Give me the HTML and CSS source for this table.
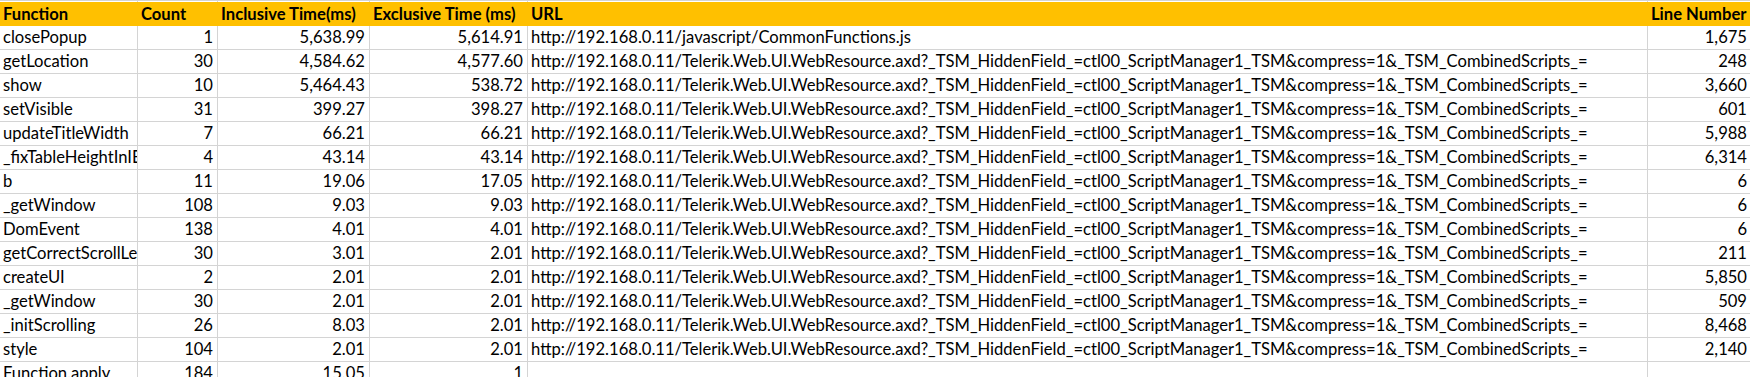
FILE: index.html
```html
<!DOCTYPE html>
<html>
<head>
  <title>Function Profile</title>
  <link rel="stylesheet" href="styles.css">
</head>

<body>
  <div class="sheet">
    <div class="row edge">
      <div class="cell"></div>
      <div class="cell"></div>
      <div class="cell"></div>
      <div class="cell"></div>
      <div class="cell"></div>
      <div class="cell"></div>
    </div>

    <div class="row head">
      <div class="cell">Function</div>
      <div class="cell">Count</div>
      <div class="cell">Inclusive Time(ms)</div>
      <div class="cell">Exclusive Time (ms)</div>
      <div class="cell">URL</div>
      <div class="cell">Line Number</div>
    </div>

    <div class="row">
      <div class="cell">closePopup</div>
      <div class="cell num">1</div>
      <div class="cell num">5,638.99</div>
      <div class="cell num">5,614.91</div>
      <div class="cell">http://192.168.0.11/javascript/CommonFunctions.js</div>
      <div class="cell num">1,675</div>
    </div>
    <div class="row">
      <div class="cell">getLocation</div>
      <div class="cell num">30</div>
      <div class="cell num">4,584.62</div>
      <div class="cell num">4,577.60</div>
      <div class="cell">http://192.168.0.11/Telerik.Web.UI.WebResource.axd?_TSM_HiddenField_=ctl00_ScriptManager1_TSM&amp;compress=1&amp;_TSM_CombinedScripts_=</div>
      <div class="cell num">248</div>
    </div>
    <div class="row">
      <div class="cell">show</div>
      <div class="cell num">10</div>
      <div class="cell num">5,464.43</div>
      <div class="cell num">538.72</div>
      <div class="cell">http://192.168.0.11/Telerik.Web.UI.WebResource.axd?_TSM_HiddenField_=ctl00_ScriptManager1_TSM&amp;compress=1&amp;_TSM_CombinedScripts_=</div>
      <div class="cell num">3,660</div>
    </div>
    <div class="row">
      <div class="cell">setVisible</div>
      <div class="cell num">31</div>
      <div class="cell num">399.27</div>
      <div class="cell num">398.27</div>
      <div class="cell">http://192.168.0.11/Telerik.Web.UI.WebResource.axd?_TSM_HiddenField_=ctl00_ScriptManager1_TSM&amp;compress=1&amp;_TSM_CombinedScripts_=</div>
      <div class="cell num">601</div>
    </div>
    <div class="row">
      <div class="cell">updateTitleWidth</div>
      <div class="cell num">7</div>
      <div class="cell num">66.21</div>
      <div class="cell num">66.21</div>
      <div class="cell">http://192.168.0.11/Telerik.Web.UI.WebResource.axd?_TSM_HiddenField_=ctl00_ScriptManager1_TSM&amp;compress=1&amp;_TSM_CombinedScripts_=</div>
      <div class="cell num">5,988</div>
    </div>
    <div class="row">
      <div class="cell">_fixTableHeightInIE</div>
      <div class="cell num">4</div>
      <div class="cell num">43.14</div>
      <div class="cell num">43.14</div>
      <div class="cell">http://192.168.0.11/Telerik.Web.UI.WebResource.axd?_TSM_HiddenField_=ctl00_ScriptManager1_TSM&amp;compress=1&amp;_TSM_CombinedScripts_=</div>
      <div class="cell num">6,314</div>
    </div>
    <div class="row">
      <div class="cell">b</div>
      <div class="cell num">11</div>
      <div class="cell num">19.06</div>
      <div class="cell num">17.05</div>
      <div class="cell">http://192.168.0.11/Telerik.Web.UI.WebResource.axd?_TSM_HiddenField_=ctl00_ScriptManager1_TSM&amp;compress=1&amp;_TSM_CombinedScripts_=</div>
      <div class="cell num">6</div>
    </div>
    <div class="row">
      <div class="cell">_getWindow</div>
      <div class="cell num">108</div>
      <div class="cell num">9.03</div>
      <div class="cell num">9.03</div>
      <div class="cell">http://192.168.0.11/Telerik.Web.UI.WebResource.axd?_TSM_HiddenField_=ctl00_ScriptManager1_TSM&amp;compress=1&amp;_TSM_CombinedScripts_=</div>
      <div class="cell num">6</div>
    </div>
    <div class="row">
      <div class="cell">DomEvent</div>
      <div class="cell num">138</div>
      <div class="cell num">4.01</div>
      <div class="cell num">4.01</div>
      <div class="cell">http://192.168.0.11/Telerik.Web.UI.WebResource.axd?_TSM_HiddenField_=ctl00_ScriptManager1_TSM&amp;compress=1&amp;_TSM_CombinedScripts_=</div>
      <div class="cell num">6</div>
    </div>
    <div class="row">
      <div class="cell">getCorrectScrollLeft</div>
      <div class="cell num">30</div>
      <div class="cell num">3.01</div>
      <div class="cell num">2.01</div>
      <div class="cell">http://192.168.0.11/Telerik.Web.UI.WebResource.axd?_TSM_HiddenField_=ctl00_ScriptManager1_TSM&amp;compress=1&amp;_TSM_CombinedScripts_=</div>
      <div class="cell num">211</div>
    </div>
    <div class="row">
      <div class="cell">createUI</div>
      <div class="cell num">2</div>
      <div class="cell num">2.01</div>
      <div class="cell num">2.01</div>
      <div class="cell">http://192.168.0.11/Telerik.Web.UI.WebResource.axd?_TSM_HiddenField_=ctl00_ScriptManager1_TSM&amp;compress=1&amp;_TSM_CombinedScripts_=</div>
      <div class="cell num">5,850</div>
    </div>
    <div class="row">
      <div class="cell">_getWindow</div>
      <div class="cell num">30</div>
      <div class="cell num">2.01</div>
      <div class="cell num">2.01</div>
      <div class="cell">http://192.168.0.11/Telerik.Web.UI.WebResource.axd?_TSM_HiddenField_=ctl00_ScriptManager1_TSM&amp;compress=1&amp;_TSM_CombinedScripts_=</div>
      <div class="cell num">509</div>
    </div>
    <div class="row">
      <div class="cell">_initScrolling</div>
      <div class="cell num">26</div>
      <div class="cell num">8.03</div>
      <div class="cell num">2.01</div>
      <div class="cell">http://192.168.0.11/Telerik.Web.UI.WebResource.axd?_TSM_HiddenField_=ctl00_ScriptManager1_TSM&amp;compress=1&amp;_TSM_CombinedScripts_=</div>
      <div class="cell num">8,468</div>
    </div>
    <div class="row">
      <div class="cell">style</div>
      <div class="cell num">104</div>
      <div class="cell num">2.01</div>
      <div class="cell num">2.01</div>
      <div class="cell">http://192.168.0.11/Telerik.Web.UI.WebResource.axd?_TSM_HiddenField_=ctl00_ScriptManager1_TSM&amp;compress=1&amp;_TSM_CombinedScripts_=</div>
      <div class="cell num">2,140</div>
    </div>
    <div class="row">
      <div class="cell">Function.apply</div>
      <div class="cell num">184</div>
      <div class="cell num">15.05</div>
      <div class="cell num">1</div>
      <div class="cell"></div>
      <div class="cell num"></div>
    </div>
  </div>
</body>
</html>
```

FILE: styles.css
```css
body {
  margin: 0;
  overflow: hidden;
  background-color: #fff;
  font-family: Lato, "Open Sans", sans-serif;
  font-size: 16.6px;
  color: #000;
}

.sheet {
  width: 1752px;
}

.row {
  display: grid;
  grid-template-columns: 138px 80px 152px 158px 1120px 104px;
}

.cell {
  height: 23px;
  line-height: 23px;
  padding: 0 4px 0 3px;
  border-right: 1px solid #d4d4d4;
  border-bottom: 1px solid #d4d4d4;
  white-space: nowrap;
  overflow: hidden;
}

.num {
  text-align: right;
}

/* gridline strip left from the row above the header */
.edge .cell {
  height: 1px;
  border-top: 1px solid #d4d4d4;
  border-bottom: none;
}

.head .cell {
  height: 24px;
  line-height: 24px;
  background-color: #ffc000;
  border: none;
  font-weight: bold;
}
```
